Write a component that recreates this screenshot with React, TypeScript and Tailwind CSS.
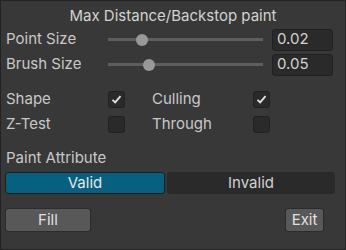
import React from "react";

function Slider({ pos }: { pos: number }) {
  return (
    <div className="relative flex h-full w-[155px] items-center">
      <div className="h-[3px] w-full bg-[#5e5e5e]" />
      <div
        className="absolute top-1/2 h-[12px] w-[12px] -translate-x-1/2 -translate-y-1/2 rounded-full bg-[#999999]"
        style={{ left: `${pos}px` }}
      />
    </div>
  );
}

function NumberField({ value }: { value: string }) {
  return (
    <div className="flex h-[22px] w-[61px] items-center rounded-[3px] border border-[#212121] bg-[#2a2a2a] pl-[4px] text-[15px] text-[#d2d2d2]">
      {value}
    </div>
  );
}

function Checkbox({ checked }: { checked: boolean }) {
  return (
    <div className="flex h-[17px] w-[17px] items-center justify-center rounded-[3px] border border-[#212121] bg-[#2a2a2a]">
      {checked ? (
        <svg width="11" height="11" viewBox="0 0 11 11">
          <path d="M1.5 5.8 L4.2 8.4 L9.5 2.2" fill="none" stroke="#e4e4e4" strokeWidth="1.8" />
        </svg>
      ) : null}
    </div>
  );
}

export default function App() {
  return (
    <div
      className="flex h-[250px] w-[346px] flex-col border border-[#232323] bg-[#383838] px-[4px] text-[15px] text-[#c8c8c8]"
      style={{ fontFamily: "Inter, 'Noto Sans', sans-serif" }}
    >
      <div className="flex h-[25px] items-center justify-center pt-[5px] text-[#d2d2d2]">
        Max Distance/Backstop paint
      </div>

      <div className="mt-[1px] flex h-[25px] items-center">
        <div className="w-[103px] pl-[1px]">Point Size</div>
        <Slider pos={34} />
        <div className="ml-[9px]">
          <NumberField value="0.02" />
        </div>
      </div>
      <div className="flex h-[25px] items-center">
        <div className="w-[103px] pl-[1px]">Brush Size</div>
        <Slider pos={41} />
        <div className="ml-[9px]">
          <NumberField value="0.05" />
        </div>
      </div>

      <div className="mt-[10px] flex h-[25px] items-center">
        <div className="w-[103px] pl-[1px]">Shape</div>
        <Checkbox checked />
        <div className="ml-[27px] w-[101px]">Culling</div>
        <Checkbox checked />
      </div>
      <div className="flex h-[25px] items-center">
        <div className="w-[103px] pl-[1px]">Z-Test</div>
        <Checkbox checked={false} />
        <div className="ml-[27px] w-[101px]">Through</div>
        <Checkbox checked={false} />
      </div>

      <div className="mt-[11px] flex h-[20px] items-center pl-[1px]">Paint Attribute</div>

      <div className="mt-[4px] flex h-[22px] gap-[2px] pr-[6px]">
        <div className="flex w-[160px] items-center justify-center rounded-[3px] border border-[#1e1e1e] bg-[#06607f] text-[#e6e6e6]">
          Valid
        </div>
        <div className="flex flex-1 items-center justify-center rounded-[3px] bg-[#2a2a2a] text-[#d2d2d2]">
          Invalid
        </div>
      </div>

      <div className="mt-[14px] flex h-[24px] items-stretch justify-between pr-[17px] text-[#e0e0e0]">
        <div className="flex w-[86px] items-center justify-center rounded-[3px] border border-[#2c2c2c] bg-[#585858]">
          Fill
        </div>
        <div className="flex w-[39px] items-center justify-center rounded-[3px] border border-[#2c2c2c] bg-[#585858]">
          Exit
        </div>
      </div>
    </div>
  );
}
